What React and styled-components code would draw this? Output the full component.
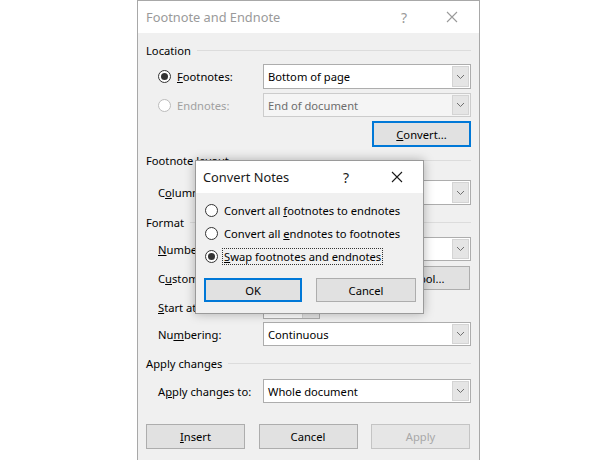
import React from 'react';
import styled, { createGlobalStyle } from 'styled-components';

const GlobalStyle = createGlobalStyle`
	html, body {
		margin: 0;
		padding: 0;
		background: #ffffff;
	}
	body {
		font-family: 'Noto Sans', 'Open Sans', sans-serif;
		font-size: 11.2px;
		color: #000;
	}
`;

const Stage = styled.div`
	position: relative;
	width: 616px;
	height: 460px;
	overflow: hidden;
	padding-left: 137px;
	box-sizing: border-box;
`;

const Window = styled.div`
	width: 343px;
	height: 470px;
	box-sizing: border-box;
	border: 1px solid #a8a8a8;
	border-bottom: none;
	background: #f0f0f0;
	display: flex;
	flex-direction: column;
`;

const TitleBar = styled.div`
	height: ${p => p.$h || 32}px;
	flex: none;
	background: #ffffff;
	display: flex;
	align-items: center;
	padding-left: ${p => p.$pl || 8}px;
	padding-right: ${p => p.$pr || 4}px;
	font-size: 12.8px;
	color: ${p => (p.$active ? '#1a1a1a' : '#9a9a9a')};
`;

const TitleText = styled.span`
	flex: 1;
`;

const TitleButton = styled.span`
	width: ${p => p.$w}px;
	text-align: center;
	font-size: 14px;
	display: flex;
	justify-content: center;
	align-items: center;
`;

const Body = styled.div`
	padding: 0 8px 0 8px;
	display: flex;
	flex-direction: column;
`;

const Section = styled.div`
	height: 16px;
	margin-top: ${p => p.$mt}px;
	display: flex;
	align-items: center;
	gap: 6px;
	&::after {
		content: '';
		flex: 1;
		height: 1px;
		background: #dcdcdc;
	}
`;

const Row = styled.div`
	display: flex;
	align-items: center;
	height: ${p => p.$h || 25}px;
	margin-top: ${p => p.$mt}px;
	padding-left: 12px;
	justify-content: ${p => (p.$end ? 'flex-end' : 'flex-start')};
`;

const Label = styled.div`
	width: 105px;
	flex: none;
	display: flex;
	align-items: center;
	gap: 6px;
	color: ${p => (p.$disabled ? '#a0a0a0' : '#000')};
`;

const Radio = styled.span`
	width: 13px;
	height: 13px;
	box-sizing: border-box;
	border-radius: 50%;
	border: 1px solid ${p => (p.$disabled ? '#bcbcbc' : '#333333')};
	background: #ffffff;
	display: inline-flex;
	align-items: center;
	justify-content: center;
	flex: none;
	&::after {
		content: '';
		width: 7px;
		height: 7px;
		border-radius: 50%;
		background: ${p => (p.$checked ? '#333333' : 'transparent')};
	}
`;

const SelectBox = styled.div`
	flex: 1;
	height: 100%;
	box-sizing: border-box;
	border: 1px solid ${p => (p.$disabled ? '#cccccc' : '#adadad')};
	background: ${p => (p.$disabled ? '#f5f5f5' : '#ffffff')};
	color: ${p => (p.$disabled ? '#6d6d6d' : '#000')};
	display: flex;
	align-items: center;
	padding-left: 4px;
`;

const SelectText = styled.span`
	flex: 1;
`;

const DropButton = styled.span`
	width: 17px;
	height: calc(100% - 2px);
	margin-right: 1px;
	box-sizing: border-box;
	background: #e5e5e5;
	border: 1px solid #d4d4d4;
	display: flex;
	align-items: center;
	justify-content: center;
`;

const Input = styled.div`
	width: 100px;
	height: 100%;
	box-sizing: border-box;
	border: 1px solid #adadad;
	background: #ffffff;
	margin-right: 8px;
`;

const Spin = styled.div`
	width: 57px;
	height: 100%;
	box-sizing: border-box;
	border: 1px solid #adadad;
	background: #ffffff;
	display: flex;
	align-items: center;
	padding-left: 4px;
	justify-content: space-between;
`;

const SpinArrows = styled.span`
	width: 16px;
	height: 100%;
	background: #e5e5e5;
	border-left: 1px solid #d4d4d4;
`;

const Button = styled.div`
	width: ${p => p.$w || 99}px;
	height: ${p => p.$h || 26}px;
	box-sizing: border-box;
	background: ${p => (p.$disabled ? '#e6e6e6' : '#e1e1e1')};
	border: 1px solid ${p => (p.$focus ? '#0078d7' : p.$disabled ? '#c4c4c4' : '#adadad')};
	box-shadow: ${p => (p.$focus ? 'inset 0 0 0 1px #0078d7' : 'none')};
	color: ${p => (p.$disabled ? '#a8a8a8' : '#000')};
	display: flex;
	align-items: center;
	justify-content: center;
	flex: none;
`;

const ButtonBar = styled.div`
	display: flex;
	justify-content: space-between;
	margin-top: ${p => p.$mt}px;
	padding-right: ${p => p.$pr || 0}px;
	padding-left: ${p => p.$pl || 0}px;
`;

const Key = styled.span`
	text-decoration: underline;
`;

const Popup = styled.div`
	position: absolute;
	left: 195px;
	top: 160px;
	width: 229px;
	height: 154px;
	box-sizing: border-box;
	border: 1px solid #9a9a9a;
	background: #f0f0f0;
	box-shadow: 0 0 10px rgba(0, 0, 0, 0.28);
	display: flex;
	flex-direction: column;
`;

const Options = styled.div`
	display: flex;
	flex-direction: column;
	gap: 1px;
	margin-top: 6px;
	padding-left: 9px;
`;

const Option = styled.div`
	height: 22px;
	display: flex;
	align-items: center;
	gap: 4px;
`;

const OptionText = styled.span`
	padding: 0 1px;
	line-height: 15px;
	border: 1px dotted ${p => (p.$focus ? '#333' : 'transparent')};
`;

const Chevron = () => (
	<svg width="9" height="6" viewBox="0 0 9 6">
		<path d="M1 1 L4.5 4.5 L8 1" fill="none" stroke="#707070" strokeWidth="1" />
	</svg>
);

const Close = ({ color }) => (
	<svg width="12" height="12" viewBox="0 0 12 12">
		<path d="M1 1 L11 11 M11 1 L1 11" stroke={color} strokeWidth="1.1" />
	</svg>
);

const Select = ({ value, disabled }) => (
	<SelectBox $disabled={disabled}>
		<SelectText>{value}</SelectText>
		<DropButton>
			<Chevron />
		</DropButton>
	</SelectBox>
);

export default function App() {
	return (
		<>
			<GlobalStyle />
			<Stage>
				<Window>
					<TitleBar>
						<TitleText>Footnote and Endnote</TitleText>
						<TitleButton $w={50}>?</TitleButton>
						<TitleButton $w={46}>
							<Close color="#9a9a9a" />
						</TitleButton>
					</TitleBar>
					<Body>
						<Section $mt={9}>Location</Section>
						<Row $mt={6}>
							<Label>
								<Radio $checked />
								<span>
									<Key>F</Key>ootnotes:
								</span>
							</Label>
							<Select value="Bottom of page" />
						</Row>
						<Row $mt={4} $h={24}>
							<Label $disabled>
								<Radio $disabled />
								<span>Endnotes:</span>
							</Label>
							<Select value="End of document" disabled />
						</Row>
						<Row $mt={4} $h={26} $end>
							<Button $focus>
								<span>
									<Key>C</Key>onvert...
								</span>
							</Button>
						</Row>
						<Section $mt={5}>Footnote layout</Section>
						<Row $mt={12}>
							<Label>
								<span>
									C<Key>o</Key>lumns:
								</span>
							</Label>
							<Select value="Match section layout" />
						</Row>
						<Section $mt={9}>Format</Section>
						<Row $mt={7} $h={24}>
							<Label>
								<span>
									<Key>N</Key>umber format:
								</span>
							</Label>
							<Select value="1, 2, 3, ..." />
						</Row>
						<Row $mt={5} $h={24}>
							<Label>
								<span>
									C<Key>u</Key>stom mark:
								</span>
							</Label>
							<Input />
							<Button $h={24}>Symbol...</Button>
						</Row>
						<Row $mt={5} $h={24}>
							<Label>
								<span>
									<Key>S</Key>tart at:
								</span>
							</Label>
							<Spin>
								<span>1</span>
								<SpinArrows />
							</Spin>
						</Row>
						<Row $mt={3} $h={24}>
							<Label>
								<span>
									Nu<Key>m</Key>bering:
								</span>
							</Label>
							<Select value="Continuous" />
						</Row>
						<Section $mt={9}>Apply changes</Section>
						<Row $mt={8} $h={24}>
							<Label>
								<span>
									A<Key>p</Key>ply changes to:
								</span>
							</Label>
							<Select value="Whole document" />
						</Row>
						<ButtonBar $mt={21} $pr={1}>
							<Button $h={25}>
								<span>
									<Key>I</Key>nsert
								</span>
							</Button>
							<Button $h={25}>Cancel</Button>
							<Button $h={25} $disabled>
								Apply
							</Button>
						</ButtonBar>
					</Body>
				</Window>

				<Popup>
					<TitleBar $active $h={32} $pl={7} $pr={3}>
						<TitleText>Convert Notes</TitleText>
						<TitleButton $w={56}>?</TitleButton>
						<TitleButton $w={46}>
							<Close color="#1a1a1a" />
						</TitleButton>
					</TitleBar>
					<Options>
						<Option>
							<Radio />
							<OptionText>
								Convert all <Key>f</Key>ootnotes to endnotes
							</OptionText>
						</Option>
						<Option>
							<Radio />
							<OptionText>
								Convert all <Key>e</Key>ndnotes to footnotes
							</OptionText>
						</Option>
						<Option>
							<Radio $checked />
							<OptionText $focus>
								<Key>S</Key>wap footnotes and endnotes
							</OptionText>
						</Option>
					</Options>
					<ButtonBar $mt={11} $pl={8} $pr={7}>
						<Button $w={98} $h={24} $focus>
							OK
						</Button>
						<Button $w={100} $h={24}>
							Cancel
						</Button>
					</ButtonBar>
				</Popup>
			</Stage>
		</>
	);
}
